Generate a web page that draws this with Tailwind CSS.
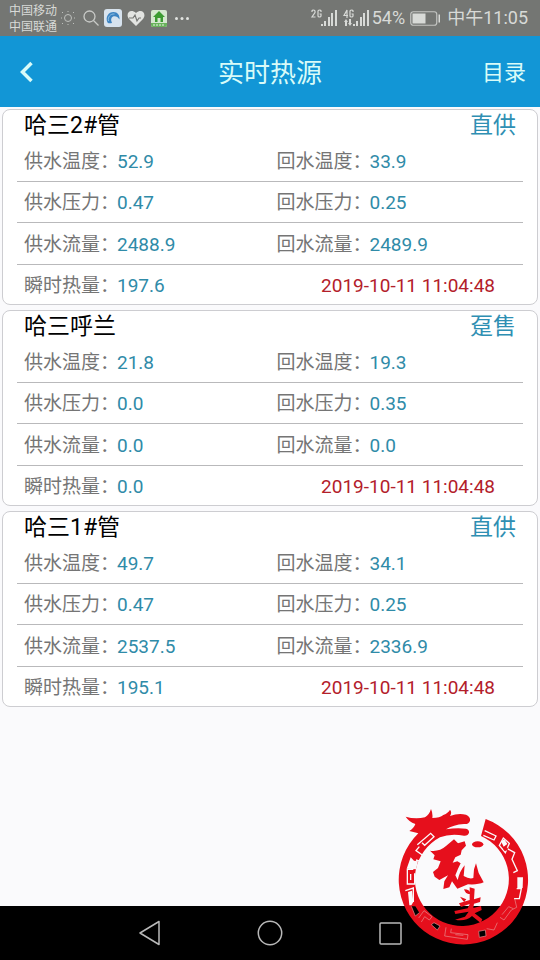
<!DOCTYPE html>
<html lang="zh-CN">
<head>
<meta charset="utf-8">
<meta name="viewport" content="width=device-width, initial-scale=1">
<title>实时热源</title>
<script src="https://cdn.jsdelivr.net/npm/@tailwindcss/browser@4"></script>
</head>
<body class="relative min-h-screen flex flex-col bg-[#fafafc] font-['Roboto','Noto_Sans_CJK_SC',sans-serif] text-[#757575]">
<div class="h-9 shrink-0 bg-[#747673] text-[#d8dad7] flex items-center justify-between pl-[9px] pr-3">
  <div class="flex items-center">
    <div class="text-[12px] leading-4 w-12 pt-[2px] whitespace-nowrap"><div>中国移动</div><div>中国联通</div></div>
    <svg class="w-[14px] h-[14px] ml-1" viewBox="0 0 14 14" fill="none" stroke="#bfc1be"><circle cx="7" cy="7" r="3.5"/><path d="M1 1l1 1M12 12l1 1M13 1l-1 1M2 12l-1 1M7 0v1M7 13v1M0 7h1M13 7h1"/></svg>
    <svg class="w-4 h-4 ml-2" viewBox="0 0 16 16" fill="none" stroke="#c8cac7" stroke-width="1.3"><circle cx="6.5" cy="6.5" r="5.5"/><path d="M10.5 10.5l5 5"/></svg>
    <svg class="w-[18px] h-[18px] ml-[5px]" viewBox="0 0 18 18"><rect width="18" height="18" rx="3" fill="#d7e3ee"/><path d="M3.500 13.500C1 8 4.500 3 9.500 3c4 0 6.500 3.500 6 7.500C14 7.500 11 6.500 9 7.500s-2.500 3.500-1 6.500c-2 .5-3.500.5-4.500-.5Z" fill="#3d84c2"/><path d="M4.500 12c-1-4 2-7.500 6-7" fill="none" stroke="#8dbfe2"/></svg>
    <svg class="w-[18px] h-4 ml-[5px]" viewBox="0 0 18 16"><path d="M9 16L2 9C-2 4 3-2 9 3C15-2 20 4 16 9Z" fill="#e2e4e1"/><path d="M2 8h4l2-3 2 6 2-3h2" fill="none" stroke="#747673" stroke-width="1.200"/></svg>
    <svg class="w-4 h-[17px] ml-[6px]" viewBox="0 0 16 17"><rect width="16" height="17" rx="2" fill="#d5e8cf"/><path d="M8 1L2 7h2v5h8V7h2Z" fill="#3c9c32"/><path d="M6.500 12V8h3v4z" fill="#d5e8cf"/><path d="M0 13h16v2q0 2-2 2H2q-2 0-2-2z" fill="#69b35c"/><path d="M2 15h12" stroke="#e9f4e5" stroke-dasharray="2 1"/></svg>
    <svg class="w-[14px] h-[3px] ml-2" viewBox="0 0 14 3" fill="#e2e4e1"><circle cx="1.500" cy="1.500" r="1.500"/><circle cx="7" cy="1.500" r="1.500"/><circle cx="12.500" cy="1.500" r="1.500"/></svg>
  </div>
  <div class="flex items-center text-[18px] leading-6 whitespace-nowrap">
    <svg class="w-[60px] h-[18px] mr-[3px]" viewBox="0 0 60 18" fill="#d8dad7"><g fill="none" stroke="#d8dad7" stroke-width="1.200"><path d="M3 3V2q0-1 1.500-1T6 2v1.500L3 8h3.500M12 3V2q0-1-1.500-1T9 2v5q0 1 1.500 1T12 7V5h-1.500M38 9V1l-3 5.500h4M44 3V2q0-1-1.500-1T41 2v5q0 1 1.500 1T44 7V5h-1.500"/></g><path d="M12 15h2v2h-2zM15 12h2v5h-2zM19 8h2v9h-2zM22 4h2v13h-2zM26 1h2v16h-2zM44 15h2v2h-2zM47 12h2v5h-2zM51 8h2v9h-2zM54 4h2v13h-2zM58 1h2v16h-2zM37 10l2 3h-1v4h-2v-4h-1zM41 17l-2-3h1v-4h2v4h1z"/></svg>
    <span>54%</span>
    <svg class="w-[31px] h-[15px] ml-[5px] mr-[6px]" viewBox="0 0 31 15"><rect x=".75" y=".75" width="26" height="13.500" rx="2.500" fill="none" stroke="#c3c5c2" stroke-width="1.200"/><rect x="2.500" y="2.500" width="13" height="10" fill="#d8dad7"/><path d="M28.500 3.500h1.500v8h-1.500z" fill="#d8dad7"/></svg>
    <span>中午11:05</span>
  </div>
</div>
<header class="h-[71px] shrink-0 bg-[#1296d6] text-[#d9fbf8] grid grid-cols-[1fr_auto_1fr] items-center px-[14px] pt-[2px]">
  <button aria-label="返回" class="justify-self-start w-6 h-6 pl-1 pb-[2px]"><svg class="w-[16px] h-[22px]" viewBox="0 0 16 22" fill="none" stroke="#d9fbf8" stroke-width="3.500"><path d="M13.500 2L4.500 11l9 9"/></svg></button>
  <h1 class="text-[26px] leading-8">实时热源</h1>
  <button class="justify-self-end text-[22px] leading-8">目录</button>
</header>
<main id="list" class="grow flex flex-col gap-[5px] pt-[2px] px-[2px]"></main>
<nav class="h-[54px] shrink-0 bg-black grid grid-cols-[1fr_auto_1fr] items-center">
  <button aria-label="返回键" class="justify-self-end mr-24"><svg class="w-[23px] h-[26px]" viewBox="0 0 23 26" fill="none" stroke="#b9b9b9" stroke-width="1.500" stroke-linejoin="round"><path d="M21 1.500v23L2 13z"/></svg></button>
  <button aria-label="主页"><svg class="w-[26px] h-[26px]" viewBox="0 0 26 26" fill="none" stroke="#b9b9b9" stroke-width="1.500"><circle cx="13" cy="13" r="11.700"/></svg></button>
  <button aria-label="最近任务" class="justify-self-start ml-24"><svg class="w-[23px] h-[23px]" viewBox="0 0 23 23" fill="none" stroke="#b9b9b9" stroke-width="1.500"><rect x="1" y="1" width="21" height="21" rx="1"/></svg></button>
</nav>
<svg class="absolute right-0 bottom-0 w-[150px] h-40 pointer-events-none" viewBox="0 0 450 480" fill="#e60f1c" aria-hidden="true">
  <path d="M287 57A194 194 0 1 1 85 100L58 93Q72 84 76 72Q56 64 47 50Q75 58 105 52Q118 44 123 27Q129 40 127 54Q150 54 160 45Q176 38 180 29Q187 38 180 48Q205 38 228 44Q242 50 240 62Q236 74 222 72Q190 74 168 88Q200 82 228 86Q238 88 237 98Q234 108 222 107Q180 100 150 112A141 141 0 1 0 273 108Z"/>
  <g fill="none" stroke="#fafafc" stroke-width="4">
    <path d="M82 134L122 100L132 110L104 136L96 128M88 140L78 152L104 170L96 186L78 180"/>
    <path d="M70 208H52V252H74V220M62 240V222M46 272L70 264V306"/>
    <path d="M284 92L318 108L312 120L280 106M340 114L328 136L346 158L358 130ZM352 146L374 158L366 178L382 212L370 218"/>
    <path d="M380 266H394L388 296H372"/>
  </g>
  <path fill="#fafafc" d="M62 172L72 182L84 184L78 208L50 206ZM382 232H399L398 264H382ZM54 276L66 272L70 306L64 316H58ZM333 124L343 118L352 132L341 140Z"/>
  <ellipse cx="347" cy="147" rx="7" ry="5"/>
  <path fill="#000" d="M64 319H76L88 338L76 348ZM124 374L132 368L150 378L142 390ZM266 394L286 390L288 408L268 412Z"/>
  <g fill="none" stroke="#e78f91" stroke-width="2">
    <path d="M64 319L76 348L88 338M86 354L102 332L126 350L118 360L104 350L94 366M124 374L132 368L150 378L142 390Z"/>
    <path d="M168 382L164 408L232 418L234 404L182 398L184 386M196 404L220 406M266 394L286 390L288 408L268 412ZM290 386L312 390L322 368"/>
    <path d="M330 352L342 360L364 330L380 322L374 296M336 344L356 320L370 326"/>
  </g>
  <path d="M120 152Q148 156 168 138L192 118L204 130L224 124L228 137L215 151L212 164L196 172L188 188L202 184L212 190L204 206L196 226L203 240Q210 212 224 196L221 228Q238 238 250 234L252 208L258 190L266 219L281 247Q264 255 234 253L202 266L186 244L178 262L160 267L163 244L174 226L148 240L134 230L129 216L144 204L152 184L130 178L134 166Z"/>
  <ellipse cx="263" cy="133" rx="17" ry="9"/>
  <path d="M222 268Q240 268 240 281Q228 285 222 268ZM239 262L254 266L252 298L272 292L270 306L252 311L250 324L273 318L275 330L254 340L277 358L272 369L246 348Q226 366 195 359L225 350L236 335L196 342L193 333L233 325L239 312L213 321L207 310L239 300ZM210 290L229 298L222 306Z"/>
</svg>
<template id="card">
  <section class="h-[196px] shrink-0 bg-white border border-[#cdcdd1] rounded-lg px-[14px]">
    <div class="h-[30px] pt-[2px] flex items-center justify-between px-[7px] text-[23px] leading-8"><h2 class="text-black"></h2><span class="text-[#2f8fb3]"></span></div>
    <dl></dl>
  </section>
</template>
<script>
const data=[
 ['哈三2#管','直供',['52.9','33.9','0.47','0.25','2488.9','2489.9','197.6']],
 ['哈三呼兰','趸售',['21.8','19.3','0.0','0.35','0.0','0.0','0.0']],
 ['哈三1#管','直供',['49.7','34.1','0.47','0.25','2537.5','2336.9','195.1']]];
const cell=(k,v)=>`<div class="flex text-[19px] leading-6"><dt class="w-[93px] shrink-0 whitespace-nowrap">${k}：</dt><dd class="text-[#2f8ba8]">${v}</dd></div>`;
for(const [name,type,v] of data){
  const c=document.getElementById('card').content.cloneNode(true);
  c.querySelector('h2').textContent=name;c.querySelector('span').textContent=type;
  c.querySelector('dl').innerHTML=['温度','压力','流量'].map((k,i)=>`<div class="${i==1?'h-[41px]':'h-[42px]'} border-b border-[#b9b9bb] grid grid-cols-2 gap-x-[6px] items-center pl-[7px] pt-[2px]">${cell('供水'+k,v[2*i])}${cell('回水'+k,v[2*i+1])}</div>`).join('')+`<div class="h-[39px] flex items-center justify-between pl-[7px] pr-7 pt-[2px]">${cell('瞬时热量',v[6])}<time class="text-[19px] leading-6 text-[#b3202a]">2019-10-11 11:04:48</time></div>`;
  document.getElementById('list').append(c);
}
</script>
</body>
</html>
